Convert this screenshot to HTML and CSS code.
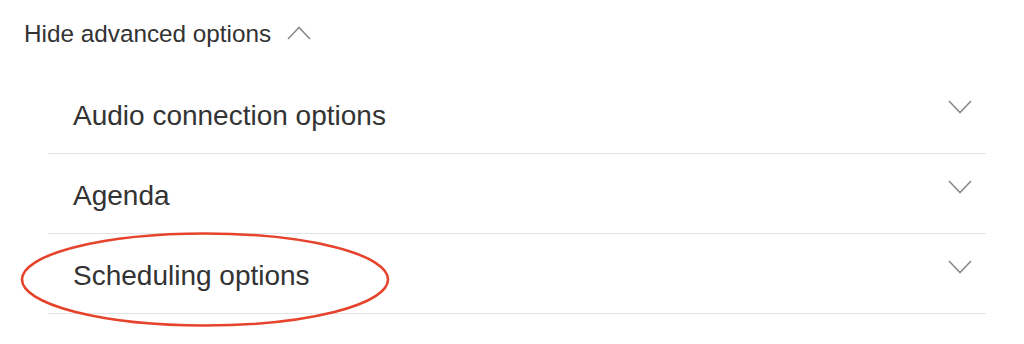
FILE: index.html
```html
<!DOCTYPE html>
<html>
<head>
<meta charset="utf-8">
<link rel="stylesheet" href="styles.css">
</head>
<body>
<div class="page">
  <div class="toggle">
    <span class="toggle-label">Hide advanced options</span>
    <svg class="chev-up" width="24" height="14" viewBox="0 0 24 14"><path d="M1 13 L12 1.5 L23 13" fill="none" stroke="#8a8a8a" stroke-width="1.6"/></svg>
  </div>
  <div class="sections">
    <div class="section">
      <span class="section-title">Audio connection options</span>
      <svg class="chev" width="24" height="14" viewBox="0 0 24 14"><path d="M1 1 L12 12.5 L23 1" fill="none" stroke="#8a8a8a" stroke-width="1.6"/></svg>
    </div>
    <div class="section">
      <span class="section-title">Agenda</span>
      <svg class="chev" width="24" height="14" viewBox="0 0 24 14"><path d="M1 1 L12 12.5 L23 1" fill="none" stroke="#8a8a8a" stroke-width="1.6"/></svg>
    </div>
    <div class="section">
      <span class="section-title">Scheduling options</span>
      <svg class="chev" width="24" height="14" viewBox="0 0 24 14"><path d="M1 1 L12 12.5 L23 1" fill="none" stroke="#8a8a8a" stroke-width="1.6"/></svg>
    </div>
  </div>
  <svg class="highlight" width="372" height="97" viewBox="0 0 372 97"><ellipse cx="186" cy="48.5" rx="183" ry="46" fill="none" stroke="#e5432b" stroke-width="2.6"/></svg>
</div>
</body>
</html>
```
FILE: styles.css
```css
html, body {
  margin: 0;
  padding: 0;
  background: #ffffff;
}
.page {
  position: relative;
  width: 1024px;
  height: 344px;
  font-family: "Liberation Sans", Arial, Helvetica, sans-serif;
  color: #333333;
}
.toggle {
  display: flex;
  align-items: center;
  gap: 16px;
  padding: 20px 0 0 24px;
  height: 28px;
}
.toggle-label {
  font-size: 24.3px;
  line-height: 28px;
}
.chev-up {
  display: block;
  margin-top: -2px;
}
.sections {
  margin: 26px 38px 0 48px;
}
.section {
  display: flex;
  justify-content: space-between;
  align-items: flex-start;
  border-bottom: 1px solid #e4e4e4;
  padding: 0 14px 0 25px;
  box-sizing: border-box;
  height: 80px;
}
.section-title {
  font-size: 28px;
  line-height: 32px;
  margin-top: 26px;
}
.chev {
  display: block;
  margin-top: 26px;
}
.highlight {
  position: absolute;
  left: 19px;
  top: 231px;
}
```
